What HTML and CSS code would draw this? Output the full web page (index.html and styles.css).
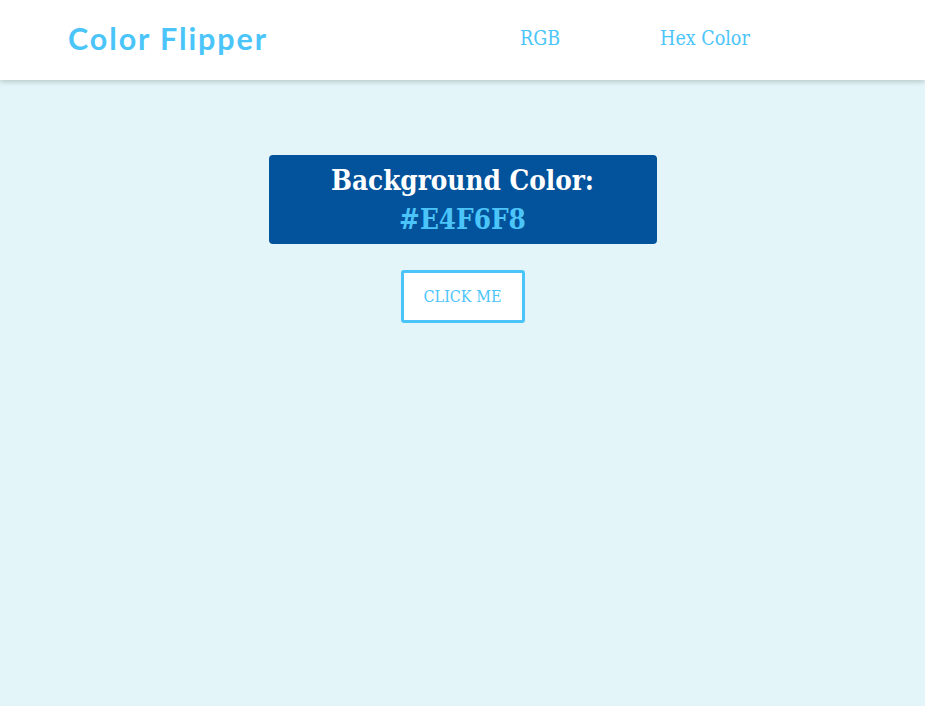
FILE: index.html
```html
<!DOCTYPE html>
<html lang="en">
<head>
<meta charset="utf-8">
<title>Color Flipper</title>
<link rel="stylesheet" href="styles.css">
</head>
<body>
<nav class="navbar">
  <div class="nav-center">
    <h4 class="logo">Color Flipper</h4>
    <ul class="nav-links">
      <li><a href="#">RGB</a></li>
      <li><a href="#">Hex Color</a></li>
    </ul>
  </div>
</nav>
<main class="main">
  <div class="container">
    <h2 class="title">Background Color:<br><span class="color">#E4F6F8</span></h2>
    <button class="btn">CLICK ME</button>
  </div>
</main>
</body>
</html>
```
FILE: styles.css
```css
* { box-sizing: border-box; margin: 0; padding: 0; }
html, body { height: 100%; }
body {
  background: #e3f5f8;
  font-family: "DejaVu Serif", serif;
}
.navbar {
  height: 80px;
  background: #ffffff;
  box-shadow: 0 2px 5px rgba(0,0,0,0.18);
  display: flex;
  align-items: center;
}
.nav-center {
  width: 100%;
  padding-left: 68px;
  display: flex;
  align-items: center;
}
.logo {
  font-family: Lato, sans-serif;
  font-weight: 700;
  font-size: 30.5px;
  letter-spacing: 1.9px;
  color: #4bc5f9;
  margin-top: -4px;
}
.nav-links {
  list-style: none;
  display: flex;
  margin-left: 252px;
  margin-top: -3px;
}
.nav-links li { margin-right: 100px; }
.nav-links a {
  text-decoration: none;
  color: #4bc5f9;
  font-size: 19.5px;
  font-family: "DejaVu Serif Condensed", "DejaVu Serif", serif;
}
.main {
  display: flex;
  justify-content: center;
  padding-top: 75px;
}
.container {
  display: flex;
  flex-direction: column;
  align-items: center;
}
.title {
  width: 388px;
  height: 89px;
  background: #02539c;
  color: #ffffff;
  border-radius: 4px;
  text-align: center;
  font-family: "DejaVu Serif Condensed", "DejaVu Serif", serif;
  font-weight: 700;
  font-size: 27.6px;
  line-height: 39px;
  padding-top: 6px;
}
.color { color: #4bc5f9; }
.btn {
  margin-top: 26px;
  width: 124px;
  height: 53px;
  background: #ffffff;
  border: 3px solid #4bc5f9;
  border-radius: 3px;
  color: #4bc5f9;
  font-family: "DejaVu Serif Condensed", "DejaVu Serif", serif;
  font-size: 16px;
  cursor: pointer;
}
```
